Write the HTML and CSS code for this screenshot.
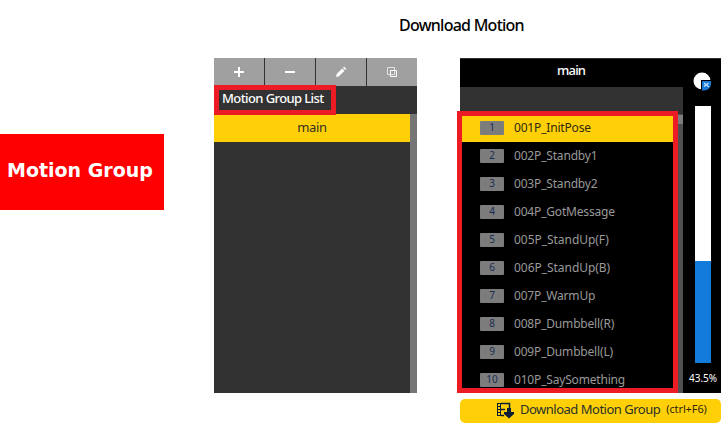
FILE: index.html
```html
<!DOCTYPE html>
<html lang="en">
<head>
<meta charset="utf-8">
<title>Download Motion</title>
<link rel="stylesheet" href="styles.css">
</head>
<body>
<main class="page">
  <div class="callout"><span class="callout-text">Motion Group</span></div>
  <section class="groups">
    <div class="toolbar">
      <div class="tool"><svg width="12" height="12" viewBox="0 0 12 12"><path d="M6 1v10M1 6h10" stroke="#fff" stroke-width="2"/></svg></div>
      <div class="tool"><svg width="12" height="12" viewBox="0 0 12 12"><path d="M1 6h10" stroke="#fff" stroke-width="2"/></svg></div>
      <div class="tool"><svg width="12" height="12" viewBox="0 0 12 12"><path d="M1 11l.7-3L7.2 2.500l2.300 2.300L4 10.300zM8 1.700l1.100-1.100L11.400 2.900 10.300 4z" fill="#fff"/></svg></div>
      <div class="tool"><svg width="12" height="12" viewBox="0 0 12 12" fill="none" stroke="#fff"><path d="M1.500 1.500h7v7h-7z" stroke="#e4e4e4"/><path d="M4.500 4.500h6v6h-6z"/></svg></div>
    </div>
    <div class="group-heading"><span class="t-heading">Motion Group List</span></div>
    <div class="group-body">
      <div class="group-list"><div class="group-item"><span class="t-group">main</span></div></div>
      <div class="group-scroll"></div>
    </div>
    <div class="frame frame-heading"></div>
  </section>
  <section class="download">
    <h1 class="title"><span class="t-title">Download Motion</span></h1>
    <div class="panel">
      <div class="motions">
        <div class="motions-head"><span class="t-main">main</span></div>
        <div class="motions-body">
          <div class="list">
            <div class="row selected"><span class="num">1</span><span class="name">001P_InitPose</span></div>
            <div class="row"><span class="num">2</span><span class="name">002P_Standby1</span></div>
            <div class="row"><span class="num">3</span><span class="name">003P_Standby2</span></div>
            <div class="row"><span class="num">4</span><span class="name">004P_GotMessage</span></div>
            <div class="row"><span class="num">5</span><span class="name wide">005P_StandUp(F)</span></div>
            <div class="row"><span class="num">6</span><span class="name wide">006P_StandUp(B)</span></div>
            <div class="row"><span class="num">7</span><span class="name">007P_WarmUp</span></div>
            <div class="row"><span class="num">8</span><span class="name">008P_Dumbbell(R)</span></div>
            <div class="row"><span class="num">9</span><span class="name">009P_Dumbbell(L)</span></div>
            <div class="row"><span class="num">10</span><span class="name">010P_SaySomething</span></div>
          </div>
          <div class="scroll"><div class="thumb"></div></div>
        </div>
      </div>
      <aside class="usage">
        <svg class="disk" width="20" height="20" viewBox="0 0 20 20"><circle cx="9" cy="9" r="8.500" fill="#fff"/><path d="M8 8h11v11H8z" fill="#000"/><path d="M9 9h9v3.500q-1 5.500-7 6H9z" fill="#1a78d2"/><path d="M11 11l5 4M15.500 11l-4.500 3.500" stroke="#c4e0ff" stroke-width="1.200"/></svg>
        <div class="meter"><div class="meter-fill"></div></div>
        <span class="percent">43.5%</span>
      </aside>
      <div class="frame frame-list"></div>
    </div>
    <div class="button">
      <svg class="film" width="18" height="17" viewBox="0 0 18 17"><path d="M1.500 1v13M4.500 1v13" stroke="#0c1d36" stroke-width="1"/><path d="M1 1.500h4M1 4.500h4M1 7.500h4M1 10.500h4M1 13.500h4" stroke="#0c1d36"/><path d="M5 1.500h8.500V6M5 7.500h4M5 13.500h3" fill="none" stroke="#0c1d36" stroke-width="1.500"/><path d="M11 6h4v4h3v2l-5 4.500L8 12v-2h3z" fill="#0c1d36"/></svg>
      <span class="t-button">Download Motion Group</span><span class="t-short">(ctrl+F6)</span>
    </div>
  </section>
</main>
</body>
</html>
```
FILE: styles.css
```css
* { box-sizing: border-box; }
body { margin: 0; background: #fff; font-family: "Noto Sans", sans-serif; overflow: hidden; }
.page { display: flex; align-items: flex-start; width: 721px; height: 425px; }
.page span { white-space: nowrap; }
.callout { width: 164px; height: 76px; margin-top: 134px; background: #f00; display: flex; align-items: center; padding: 0 0 5px 7px; color: #fff; font: bold 19px "DejaVu Sans", sans-serif; }
.groups { position: relative; width: 203px; height: 335px; margin: 58px 0 0 50px; background: #323232; display: flex; flex-direction: column; }
.toolbar { display: grid; grid-template-columns: 50px 50px 50px 50px; column-gap: 1px; height: 28px; }
.tool { background: #a0a0a0; display: flex; align-items: center; justify-content: center; }
.group-heading { height: 28px; padding-left: 8px; line-height: 24px; color: #fff; font-size: 13px; font-weight: 500; letter-spacing: -0.6px; }
.group-body { display: flex; flex: 1; }
.group-list { width: 196px; }
.group-scroll { width: 7px; background: #767676; }
.group-item { height: 28px; background: #ffd008; color: #332f20; text-align: center; font-size: 13px; line-height: 27px; letter-spacing: -0.3px; }
.frame { position: absolute; border: 5px solid #ed1c24; }
.frame-heading { left: 0; top: 27px; width: 122px; height: 30px; }
.download { width: 261px; margin-left: 43px; }
.title { height: 58px; margin: 0 0 0 -61px; padding-top: 14px; font-size: 16px; font-weight: 500; line-height: 22px; letter-spacing: -0.75px; color: #000; }
.panel { position: relative; display: flex; height: 335px; background: #000; border-top: 1px solid #303030; }
.motions { width: 223px; display: flex; flex-direction: column; }
.motions-head { height: 28px; line-height: 23px; font-size: 13px; font-weight: 500; letter-spacing: -0.8px; color: #fff; padding-left: 97px; }
.motions-body { height: 306px; background: #323232; display: flex; padding-top: 27px; }
.list { width: 216px; height: 279px; background: #000; overflow: hidden; }
.row { display: flex; align-items: center; height: 28px; padding-left: 20px; color: #999; font-size: 12px; }
.selected { background: #ffd008; color: #302a12; }
.num { width: 24px; height: 14px; background: #7c7c7c; border-radius: 1px; color: #172d53; text-align: center; font-size: 10px; line-height: 13px; }
.name { margin-left: 10px; line-height: 26px; letter-spacing: -0.18px; }
.wide { letter-spacing: -0.04px; }
.row .name { margin-top: -1px; }
.scroll { width: 7px; background: #505050; }
.thumb { height: 9px; margin-top: 1px; background: #7d7d7d; }
.frame-list { left: -3px; top: 52px; width: 221px; height: 282px; }
.usage { width: 38px; display: flex; flex-direction: column; align-items: flex-start; padding-top: 13px; }
.disk { margin-left: 10px; }
.meter { width: 16px; height: 257px; margin: 14px 0 0 12px; background: #fff; display: flex; align-items: flex-end; }
.meter-fill { width: 16px; height: 102px; background: #127bdb; }
.percent { margin: 7px 0 0 6px; color: #fff; font-size: 10px; line-height: 16px; }
.button { height: 24px; margin-top: 6px; background: #ffd008; border-radius: 5px; display: flex; align-items: center; color: #29312a; font-size: 13px; line-height: 20px; letter-spacing: -0.5px; }
.film { margin: -2px 0 0 36px; }
.t-button { margin-left: 6px; margin-top: -5px; }
.t-short { margin-left: 6px; margin-top: -5px; font-size: 11px; color: #302808; letter-spacing: -0.1px; }
```
